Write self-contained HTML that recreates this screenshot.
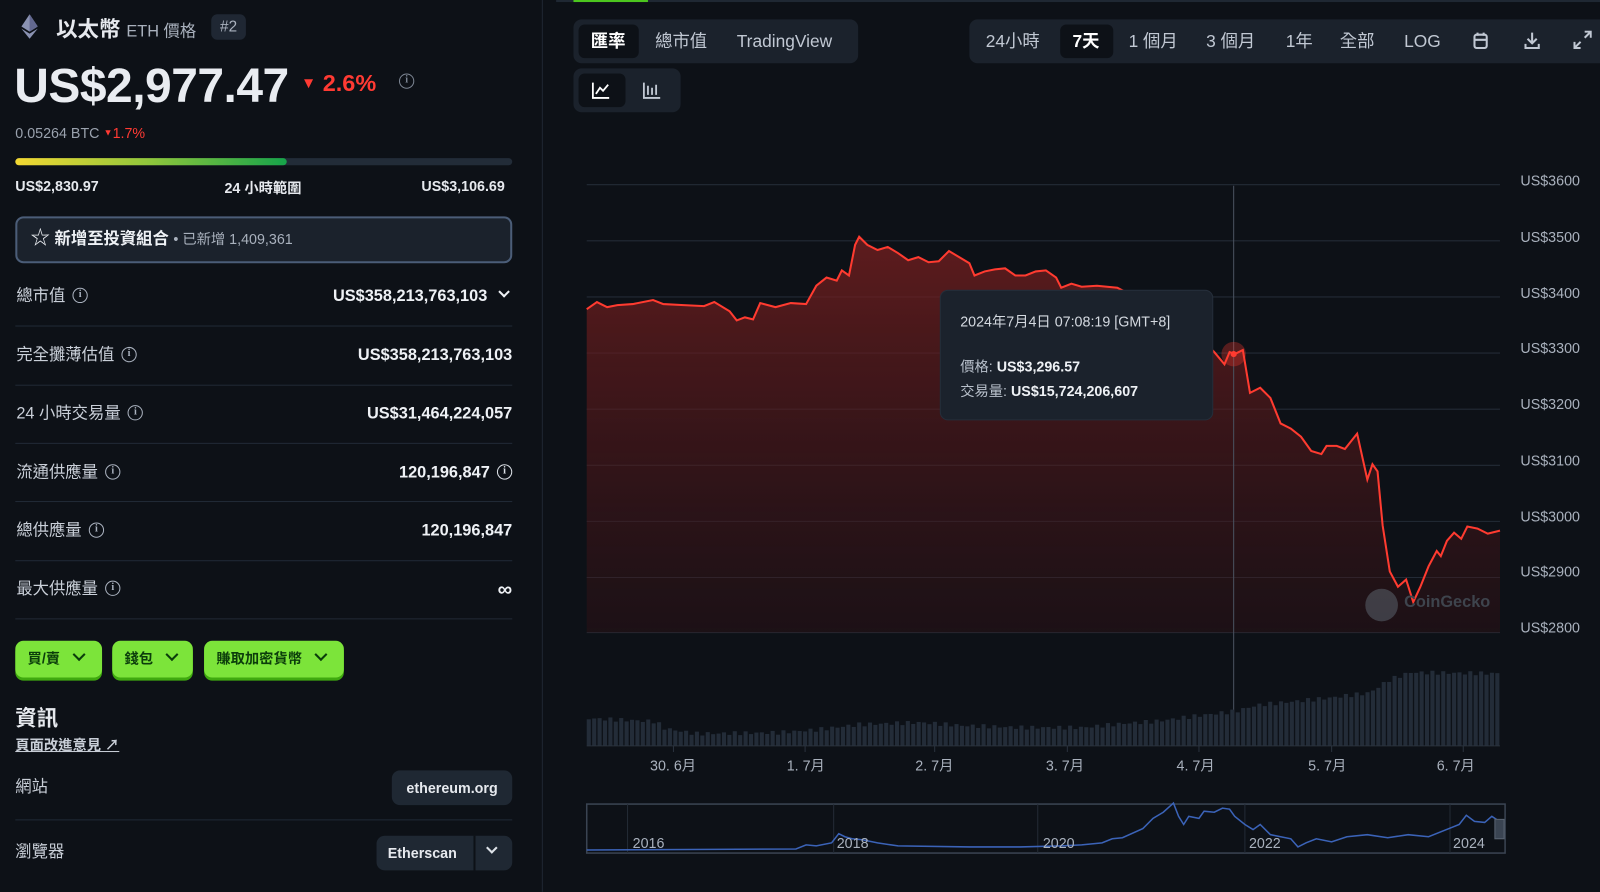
<!DOCTYPE html>
<html><head><meta charset="utf-8">
<style>
*{box-sizing:border-box;margin:0;padding:0}
html,body{width:1600px;height:874px;overflow:hidden;background:#0d1117}
#w{position:absolute;left:0;top:0;width:1568px;height:857px;transform:scale(1.0204);transform-origin:0 0;color:#e6e9ee;font-family:"Liberation Sans","Noto Sans CJK TC",sans-serif}
.a{position:absolute;white-space:nowrap}
.lbl{color:#c9cfd8;font-size:16px;line-height:20px;height:20px}
.val{font-weight:bold;font-size:16px;color:#eef1f5;right:1066px;line-height:20px;height:20px}
.hr{position:absolute;left:15px;width:487px;height:1px;background:#212a36}
.info{display:inline-block;width:15px;height:15px;border:1.5px solid #aab2bf;border-radius:50%;font-size:10px;line-height:12px;text-align:center;color:#aab2bf;font-weight:bold;vertical-align:middle;margin-left:7px;margin-top:-3px;font-family:"Liberation Serif",serif}
.gbtn{position:absolute;top:628px;height:36px;background:#7ce43a;border-radius:8px;box-shadow:0 3px 0 #3fa90f;color:#0b3d0b;font-size:14px;font-weight:bold;line-height:34px;padding-left:12px}
.chev{display:inline-block;width:9px;height:9px;border-right:2px solid currentColor;border-bottom:2px solid currentColor;transform:rotate(45deg);margin-left:14px;vertical-align:4px}
.tab{position:absolute;font-size:17px;color:#c1c8d3;line-height:20px}
.yl{position:absolute;left:1490px;font-size:14px;color:#a9b1bd}
.xl{position:absolute;top:740px;font-size:14px;color:#a9b1bd}
</style></head><body><div id="w">
<div class="a" style="left:531px;top:0;width:1px;height:874px;background:#1f2732"></div>
<svg class="a" style="left:21px;top:14px" width="16" height="24" viewBox="0 0 16 24"><path d="M8 0L0 12l8 5 8-5z" fill="#8a92b2"/><path d="M8 0v17l8-5z" fill="#62688f"/><path d="M0 14l8 10 8-10-8 5z" fill="#8a92b2"/></svg>
<div class="a" style="left:55px;top:13px;font-size:21px;font-weight:bold">以太幣 <span style="font-size:16px;font-weight:normal;color:#a9b1bd">ETH 價格</span></div>
<div class="a" style="left:207px;top:14px;width:34px;height:25px;border-radius:6px;background:#1f2733;color:#aab2bf;font-size:15px;text-align:center;line-height:25px">#2</div>
<div class="a" style="left:14px;top:56px;font-size:47px;font-weight:bold;color:#e9ecf1;letter-spacing:-0.5px">US$2,977.47</div>
<div class="a" style="left:295px;top:68px;font-size:23px;font-weight:bold;color:#ff3a33"><span style="font-size:15px;vertical-align:3px">▼</span> 2.6%</div>
<div class="a" style="left:384px;top:72px"><span class="info" style="border-color:#7d8694;color:#7d8694">i</span></div>
<div class="a" style="left:15px;top:122px;font-size:14px;color:#9aa2ae">0.05264 BTC <span style="color:#ff3a33"><span style="font-size:9px;vertical-align:2px">▼</span>1.7%</span></div>
<div class="a" style="left:15px;top:155px;width:487px;height:7px;border-radius:4px;background:#222c38"></div>
<div class="a" style="left:15px;top:155px;width:266px;height:7px;border-radius:4px;background:linear-gradient(90deg,#f3d832,#8ec63c,#16a34a)"></div>
<div class="a" style="left:15px;top:174px;font-size:14px;font-weight:bold">US$2,830.97</div>
<div class="a" style="left:220px;top:174px;font-size:14px;font-weight:bold">24 小時範圍</div>
<div class="a" style="left:413px;top:174px;font-size:14px;font-weight:bold">US$3,106.69</div>
<div class="a" style="left:15px;top:212px;width:487px;height:46px;border:2px solid #4b5d78;border-radius:8px;background:#1b222c"></div>
<div class="a" style="left:30px;top:223px;font-size:16px;font-weight:bold;color:#eef1f5;line-height:22px"><span style="font-size:19px;font-weight:normal">☆</span> 新增至投資組合 <span style="font-size:14px;font-weight:normal;color:#a9b1bd">• 已新增 1,409,361</span></div>
<div class="a lbl" style="left:16px;top:281px">總市值<span class="info">i</span></div>
<div class="a val" style="top:281px;right:1070px">US$358,213,763,103 <span class="chev" style="margin-left:8px;width:8px;height:8px;vertical-align:5px"></span></div>
<div class="hr" style="top:319px"></div>
<div class="a lbl" style="left:16px;top:339px">完全攤薄估值<span class="info">i</span></div>
<div class="a val" style="top:339px">US$358,213,763,103</div>
<div class="hr" style="top:377px"></div>
<div class="a lbl" style="left:16px;top:396px">24 小時交易量<span class="info">i</span></div>
<div class="a val" style="top:396px">US$31,464,224,057</div>
<div class="hr" style="top:434px"></div>
<div class="a lbl" style="left:16px;top:454px">流通供應量<span class="info">i</span></div>
<div class="a val" style="top:454px">120,196,847<span class="info" style="border-color:#dde2e8;color:#dde2e8">i</span></div>
<div class="hr" style="top:491px"></div>
<div class="a lbl" style="left:16px;top:511px">總供應量<span class="info">i</span></div>
<div class="a val" style="top:511px">120,196,847</div>
<div class="hr" style="top:549px"></div>
<div class="a lbl" style="left:16px;top:568px">最大供應量<span class="info">i</span></div>
<div class="a val" style="top:568px;font-size:20px">∞</div>
<div class="hr" style="top:606px"></div>
<div class="gbtn" style="left:15px;width:85px">買/賣<span class="chev"></span></div>
<div class="gbtn" style="left:110px;width:79px">錢包<span class="chev"></span></div>
<div class="gbtn" style="left:200px;width:137px">賺取加密貨幣<span class="chev"></span></div>
<div class="a" style="left:15px;top:688px;font-size:21px;font-weight:bold">資訊</div>
<div class="a" style="left:15px;top:720px;font-size:14px;font-weight:bold;color:#c9cfd8;text-decoration:underline">頁面改進意見 <span style="text-decoration:none">↗</span></div>
<div class="a lbl" style="left:15px;top:762px">網站</div>
<div class="a" style="left:384px;top:755px;width:118px;height:34px;border-radius:8px;background:#1f2833;font-size:14px;font-weight:bold;text-align:center;line-height:34px">ethereum.org</div>
<div class="hr" style="top:803px"></div>
<div class="a lbl" style="left:15px;top:826px">瀏覽器</div>
<div class="a" style="left:369px;top:819px;width:133px;height:34px;border-radius:8px;background:#1f2833;font-size:14px;font-weight:bold;line-height:34px;padding-left:11px">Etherscan</div>
<div class="a" style="left:464px;top:819px;width:2px;height:34px;background:#0d1117"></div>
<div class="a" style="left:478px;top:826px;color:#dde2e8"><span class="chev" style="margin:0;width:8px;height:8px"></span></div>
<div class="a" style="left:545px;top:0;width:1055px;height:2px;background:#1f2833"></div>
<div class="a" style="left:562px;top:0;width:73px;height:2px;background:#4cc61e"></div>
<div class="a" style="left:562px;top:19px;width:279px;height:43px;border-radius:8px;background:#1b222c"></div>
<div class="a" style="left:567px;top:24px;width:59px;height:33px;border-radius:6px;background:#0d1117"></div>
<div class="tab" style="left:579px;top:31px;color:#fff;font-weight:bold">匯率</div>
<div class="tab" style="left:642px;top:31px">總市值</div>
<div class="tab" style="left:722px;top:31px">TradingView</div>
<div class="a" style="left:950px;top:19px;width:650px;height:43px;border-radius:8px;background:#1b222c"></div>
<div class="a" style="left:1039px;top:24px;width:52px;height:33px;border-radius:6px;background:#0d1117"></div>
<div class="tab" style="left:966px;top:31px">24小時</div>
<div class="tab" style="left:1051px;top:31px;color:#fff;font-weight:bold">7天</div>
<div class="tab" style="left:1106px;top:31px">1 個月</div>
<div class="tab" style="left:1182px;top:31px">3 個月</div>
<div class="tab" style="left:1260px;top:31px">1年</div>
<div class="tab" style="left:1313px;top:31px">全部</div>
<div class="tab" style="left:1376px;top:31px">LOG</div>
<svg class="a" style="left:1443px;top:31px" width="16" height="18" viewBox="0 0 16 18" fill="none" stroke="#c1c8d3" stroke-width="2"><rect x="2" y="3" width="12" height="13" rx="2"/><path d="M2 8h12M5 1v3M11 1v3"/></svg>
<svg class="a" style="left:1493px;top:31px" width="17" height="18" viewBox="0 0 17 18" fill="none" stroke="#c1c8d3" stroke-width="2"><path d="M8.5 1v10M4 7l4.5 4.5L13 7M2 12v4h13v-4"/></svg>
<svg class="a" style="left:1542px;top:30px" width="18" height="18" viewBox="0 0 18 18" fill="none" stroke="#c1c8d3" stroke-width="2"><path d="M11 1h6v6M17 1l-6 6M7 17H1v-6M1 17l6-6"/></svg>
<div class="a" style="left:562px;top:67px;width:105px;height:43px;border-radius:8px;background:#1b222c"></div>
<div class="a" style="left:567px;top:72px;width:46px;height:33px;border-radius:6px;background:#0d1117"></div>
<svg class="a" style="left:580px;top:80px" width="18" height="17" viewBox="0 0 18 17" fill="none" stroke="#fff" stroke-width="1.8"><path d="M1 1v15h16M4 12l4-6 3 3 5-6"/></svg>
<svg class="a" style="left:630px;top:80px" width="18" height="17" viewBox="0 0 18 17" fill="none" stroke="#c1c8d3" stroke-width="1.8"><path d="M1 1v15h16M5 4v9M9 6v7M13 3v10"/></svg>
<svg class="a" style="left:0;top:0" width="1600" height="874">
<defs><linearGradient id="g" x1="0" y1="0" x2="0" y2="1"><stop offset="0" stop-color="#7a2020" stop-opacity="0.75"/><stop offset="1" stop-color="#3a1216" stop-opacity="0.35"/></linearGradient></defs>
<g stroke="#232b36" stroke-width="1">
<path d="M575 181H1470M575 236H1470M575 291H1470M575 346H1470M575 401H1470M575 456H1470M575 511H1470M575 566H1470M575 620H1470"/></g>
<path fill="url(#g)" d="M575 620 L575 303 585 296 595 301 605 299 620 298 640 294 650 298 670 299 690 300 700 296 715 305 722 314 730 311 738 313 745 297 760 301 775 297 790 298 800 280 810 272 820 275 825 265 832 270 838 240 842 232 850 240 860 245 870 242 880 248 890 255 900 252 910 257 920 256 930 246 940 252 950 258 955 270 965 266 975 264 985 263 995 270 1005 270 1015 266 1025 265 1035 272 1040 282 1050 278 1060 281 1075 280 1095 282 1120 295 1150 310 1175 330 1190 345 1200 357 1205 345 1210 347 1218 343 1225 385 1235 380 1245 390 1255 415 1265 420 1275 428 1285 442 1295 445 1300 437 1310 437 1318 440 1330 425 1340 470 1345 455 1350 462 1355 515 1362 560 1370 575 1378 568 1385 590 1392 575 1400 555 1408 540 1412 545 1418 530 1425 522 1432 528 1438 516 1448 518 1458 523 1470 520 L1470 620Z"/>
<path fill="none" stroke="#ff3b30" stroke-width="2" d="M575 303 585 296 595 301 605 299 620 298 640 294 650 298 670 299 690 300 700 296 715 305 722 314 730 311 738 313 745 297 760 301 775 297 790 298 800 280 810 272 820 275 825 265 832 270 838 240 842 232 850 240 860 245 870 242 880 248 890 255 900 252 910 257 920 256 930 246 940 252 950 258 955 270 965 266 975 264 985 263 995 270 1005 270 1015 266 1025 265 1035 272 1040 282 1050 278 1060 281 1075 280 1095 282 1120 295 1150 310 1175 330 1190 345 1200 357 1205 345 1210 347 1218 343 1225 385 1235 380 1245 390 1255 415 1265 420 1275 428 1285 442 1295 445 1300 437 1310 437 1318 440 1330 425 1340 470 1345 455 1350 462 1355 515 1362 560 1370 575 1378 568 1385 590 1392 575 1400 555 1408 540 1412 545 1418 530 1425 522 1432 528 1438 516 1448 518 1458 523 1470 520"/>
<line x1="1209" y1="182" x2="1209" y2="731" stroke="#4a5260" stroke-width="1"/>
<circle cx="1209" cy="347" r="12" fill="#ff3b30" fill-opacity="0.3"/><circle cx="1209" cy="347" r="3" fill="#ff3b30"/>
<g id="vol" fill="#232c38"></g>
<line x1="575" y1="731" x2="1470" y2="731" stroke="#2a323d"/>
<g stroke="#2a323d"><path d="M660 731v6M789 731v6M916 731v6M1046 731v6M1175 731v6M1305 731v6M1434 731v6"/></g>
<rect x="575" y="788" width="900" height="48" fill="none" stroke="#3a4452" stroke-width="1.5"/>
<g stroke="#232b36"><path d="M615 788v48M817 788v48M1017 788v48M1220 788v48M1421 788v48"/></g>
<path fill="none" stroke="#3b63b8" stroke-width="1.5" d="M575 833 L780 832 790 828 800 829 815 826 822 817 828 820 835 822 845 823 860 826 880 829 950 830 1000 830 1040 829 1060 828 1080 826 1090 822 1100 821 1120 812 1130 802 1140 796 1150 787 1155 800 1160 808 1165 800 1175 802 1180 795 1190 796 1198 792 1205 793 1210 800 1220 808 1228 813 1235 808 1245 818 1255 820 1265 822 1272 830 1280 826 1290 822 1305 825 1320 820 1340 818 1360 821 1380 818 1400 820 1420 812 1430 808 1437 799 1445 805 1455 806 1462 800 1468 804"/>
<rect x="1465" y="803" width="9" height="19" fill="#3a4452" stroke="#5a6472"/>
</svg>
<div class="yl" style="top:169px">US$3600</div><div class="yl" style="top:224px">US$3500</div><div class="yl" style="top:279px">US$3400</div><div class="yl" style="top:333px">US$3300</div><div class="yl" style="top:388px">US$3200</div><div class="yl" style="top:443px">US$3100</div><div class="yl" style="top:498px">US$3000</div><div class="yl" style="top:552px">US$2900</div><div class="yl" style="top:607px">US$2800</div>
<div class="xl" style="left:637px">30. 6月</div><div class="xl" style="left:771px">1. 7月</div><div class="xl" style="left:897px">2. 7月</div><div class="xl" style="left:1025px">3. 7月</div><div class="xl" style="left:1153px">4. 7月</div><div class="xl" style="left:1282px">5. 7月</div><div class="xl" style="left:1408px">6. 7月</div>
<div class="a" style="left:620px;top:818px;font-size:14px;color:#a9b1bd">2016</div><div class="a" style="left:820px;top:818px;font-size:14px;color:#a9b1bd">2018</div><div class="a" style="left:1022px;top:818px;font-size:14px;color:#a9b1bd">2020</div><div class="a" style="left:1224px;top:818px;font-size:14px;color:#a9b1bd">2022</div><div class="a" style="left:1424px;top:818px;font-size:14px;color:#a9b1bd">2024</div>
<div class="a" style="left:1338px;top:577px;width:32px;height:32px;border-radius:50%;background:#555c66;opacity:.6"></div>
<div class="a" style="left:1376px;top:582px;font-size:16px;font-weight:bold;color:#3e444d">CoinGecko</div>
<div class="a" style="left:921px;top:284px;width:268px;height:128px;border-radius:8px;background:#1b222c;border:1px solid #252e3a"></div>
<div class="a" style="left:941px;top:305px;font-size:14px;color:#d4d9e0">2024年7月4日 07:08:19 [GMT+8]</div>
<div class="a" style="left:941px;top:349px;font-size:14px;color:#b8c0cb">價格: <b style="color:#eef1f5">US$3,296.57</b></div>
<div class="a" style="left:941px;top:373px;font-size:14px;color:#b8c0cb">交易量: <b style="color:#eef1f5">US$15,724,206,607</b></div>
</div>
<script>
var g=document.getElementById('vol'),s='';
var k=[[575,27],[640,24],[650,17],[680,12],[760,13],[800,16],[840,21],[900,23],[940,20],[1000,18],[1060,18],[1100,22],[1130,24],[1175,30],[1209,34],[1230,40],[1280,45],[1300,47],[1340,52],[1360,65],[1380,72],[1470,71]];
function h(x){for(var i=0;i<k.length-1;i++){if(x<=k[i+1][0]){var t=(x-k[i][0])/(k[i+1][0]-k[i][0]);return k[i][1]+t*(k[i+1][1]-k[i][1]);}}return 70;}
for(var x=575;x<1470;x+=5.3){var v=h(x)+Math.sin(x*1.7)*2;s+='<rect x="'+x.toFixed(1)+'" y="'+(731-v).toFixed(1)+'" width="4" height="'+v.toFixed(1)+'"/>';}
g.innerHTML=s;
</script>
</body></html>
